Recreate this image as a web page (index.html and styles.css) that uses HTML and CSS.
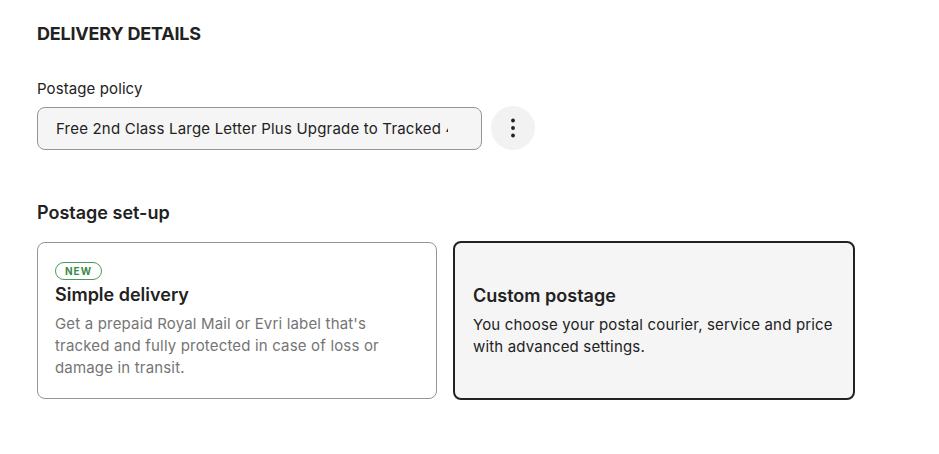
FILE: index.html
```html
<!DOCTYPE html>
<html>
<head>
<meta charset="utf-8">
<link rel="stylesheet" href="styles.css">
</head>
<body>
<div class="page">
  <h2 class="section-title">DELIVERY DETAILS</h2>
  <div class="field">
    <label class="field-label">Postage policy</label>
    <div class="policy-row">
      <div class="select"><span class="select-text">Free 2nd Class Large Letter Plus Upgrade to Tracked 48</span></div>
      <button class="kebab" aria-label="More options">
        <svg width="24" height="24" viewBox="0 0 24 24"><circle cx="12" cy="4.5" r="1.9" fill="#222"/><circle cx="12" cy="12" r="1.9" fill="#222"/><circle cx="12" cy="19.5" r="1.9" fill="#222"/></svg>
      </button>
    </div>
  </div>
  <h3 class="sub-title">Postage set-up</h3>
  <div class="cards">
    <div class="card">
      <span class="badge">NEW</span>
      <div class="card-title">Simple delivery</div>
      <p class="card-desc muted">Get a prepaid Royal Mail or Evri label that's tracked and fully protected in case of loss or damage in transit.</p>
    </div>
    <div class="card selected">
      <div class="card-title">Custom postage</div>
      <p class="card-desc">You choose your postal courier, service and price with advanced settings.</p>
    </div>
  </div>
</div>
</body>
</html>
```
FILE: styles.css
```css
* { box-sizing: border-box; }
body {
  margin: 0;
  background: #fff;
  font-family: Inter, "Noto Sans", sans-serif;
  color: #222;
}
.page {
  padding: 23px 37px;
}
.section-title {
  margin: 0;
  font-size: 18px;
  font-weight: 700;
  line-height: 22px;
  letter-spacing: -0.2px;
}
.field {
  margin-top: 34px;
}
.field-label {
  display: block;
  font-size: 15px;
  line-height: 20px;
  margin-bottom: 7px;
  letter-spacing: 0.1px;
}
.policy-row {
  display: flex;
  align-items: center;
  gap: 9px;
}
.select {
  width: 445px;
  height: 43px;
  border: 1px solid #959595;
  border-radius: 8px;
  background: #f5f5f5;
  padding: 0 18px;
  display: flex;
  align-items: center;
  overflow: hidden;
}
.select-text {
  font-size: 15px;
  white-space: nowrap;
  overflow: hidden;
  max-width: 392px;
  letter-spacing: 0.2px;
}
.kebab {
  width: 44px;
  height: 44px;
  border-radius: 50%;
  border: none;
  background: #f2f2f2;
  display: flex;
  align-items: center;
  justify-content: center;
  padding: 0;
}
.sub-title {
  margin: 52px 0 0;
  font-size: 18px;
  font-weight: 600;
  line-height: 22px;
}
.cards {
  margin-top: 18px;
  display: flex;
  gap: 16px;
}
.card {
  width: 400px;
  height: 157px;
  border: 1px solid #959595;
  border-radius: 8px;
  padding: 18px 17px;
  display: flex;
  flex-direction: column;
  justify-content: center;
  align-items: flex-start;
}
.card.selected {
  width: 402px;
  height: 159px;
  margin-top: -1px;
  border: 2px solid #222;
  background: #f5f5f5;
  padding: 18px 18px;
}
.badge {
  font-size: 10px;
  font-weight: 700;
  letter-spacing: 1px;
  color: #3a8a46;
  border: 1px solid #4d9a58;
  border-radius: 10px;
  padding: 1px 9px;
  line-height: 14px;
  margin-bottom: 3px;
}
.card-title {
  font-size: 18px;
  font-weight: 600;
  line-height: 24px;
}
.card-desc {
  margin: 6px 0 0;
  font-size: 15px;
  line-height: 22px;
  letter-spacing: 0.17px;
}
.card-desc.muted {
  color: #757575;
}
```
